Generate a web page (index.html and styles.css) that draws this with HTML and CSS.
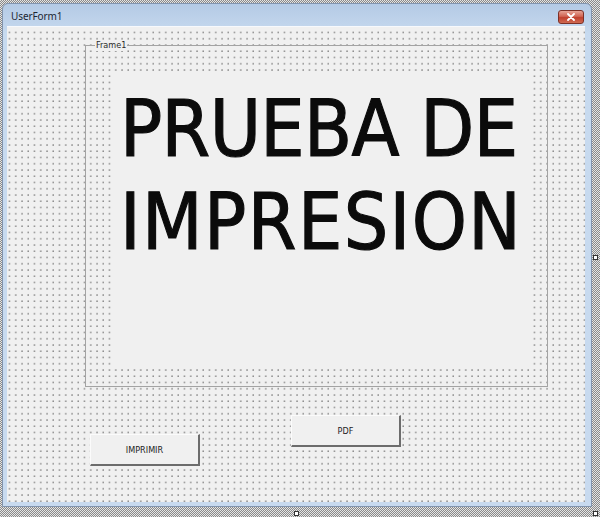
FILE: index.html
```html
<!DOCTYPE html>
<html lang="es">
<head>
<meta charset="utf-8">
<title>UserForm1</title>
<link rel="stylesheet" href="styles.css">
</head>
<body>
<div class="stage">
  <div class="window">
    <div class="titlebar">
      <span class="title">UserForm1</span>
      <span class="close">
        <svg width="10" height="8" viewBox="0 0 10 8"><path d="M2 1 L8 7 M8 1 L2 7" stroke="#fff" stroke-width="1.8" stroke-linecap="round"/></svg>
      </span>
    </div>
    <div class="client">
      <div class="frame">
        <span class="caption">Frame1</span>
        <div class="biglabel"><span class="line1">PRUEBA DE</span><br><span class="line2">IMPRESION</span></div>
      </div>
      <div class="controls">
        <div class="btn btn-low">IMPRIMIR</div>
        <div class="btn">PDF</div>
      </div>
    </div>
  </div>
  <span class="handle handle-right"></span>
  <span class="handle handle-bottom"></span>
  <span class="handle handle-corner"></span>
</div>
</body>
</html>
```
FILE: styles.css
```css
html, body {
  margin: 0;
  padding: 0;
}
body {
  width: 600px;
  height: 517px;
  overflow: hidden;
  background: #f0f0f0;
}
.stage {
  position: relative;
  width: 600px;
  height: 517px;
  box-sizing: border-box;
  padding: 3px 8px 10px 2px;
  background: repeating-conic-gradient(#8a8a8a 0 25%, #e4e4e4 0 50%) 0 0 / 2px 2px;
}
.window {
  height: 100%;
  box-sizing: border-box;
  display: flex;
  flex-direction: column;
  border: 1px solid #8194ae;
  border-radius: 6px 6px 0 0;
  padding: 0 6px 4px 4px;
  background: linear-gradient(#b4cae5, #c7daef 30px, #c8daef);
}
.titlebar {
  height: 23px;
  display: flex;
  align-items: center;
  justify-content: space-between;
  padding-left: 4px;
  padding-right: 1px;
}
.title {
  font-family: "Noto Sans", "Liberation Sans", sans-serif;
  font-size: 10px;
  letter-spacing: -0.1px;
  color: #1c2633;
}
.close {
  width: 26px;
  height: 14px;
  box-sizing: border-box;
  display: flex;
  align-items: center;
  justify-content: center;
  margin-top: 2px;
  border: 1px solid #7d3026;
  border-radius: 3px;
  background: linear-gradient(#e7a496, #d06453 45%, #c0402e 55%, #cf6a52);
}
.client {
  flex: 1;
  background-color: #f0f0f0;
  background-image: radial-gradient(circle at 1px 1px, #8a8a8a 0.5px, rgba(240,240,240,0) 1px);
  background-size: 6.25px 6.25px;
  background-position: 1.5px 4.5px;
  border-top: 1px solid #f7f9fc;
  margin-top: -1px;
}
.frame {
  position: relative;
  box-sizing: border-box;
  width: 463px;
  height: 342px;
  margin: 18px 0 0 78px;
  border: 1px solid #a3a3a3;
}
.caption {
  position: absolute;
  left: 9px;
  top: -6px;
  padding: 0 1px;
  background: #f0f0f0;
  font-family: "DejaVu Sans", sans-serif;
  font-stretch: condensed;
  font-size: 9px;
  line-height: 11px;
  color: #2a2a2a;
}
.biglabel {
  box-sizing: border-box;
  width: 417px;
  height: 294px;
  margin: 27px 0 0 27px;
  padding: 10px 0 0 7px;
  background: #f0f0f0;
  font-family: "DejaVu Sans", sans-serif;
  font-stretch: condensed;
  font-size: 78px;
  line-height: 93px;
  -webkit-text-stroke: 1.1px #0b0b0b;
  color: #0b0b0b;
  white-space: nowrap;
}
.line1 {
  letter-spacing: -0.7px;
}
.line2 {
  letter-spacing: 1.4px;
}
.controls {
  display: flex;
  align-items: flex-start;
  gap: 91px;
  margin-top: 28px;
  padding-left: 83px;
}
.btn {
  width: 110px;
  height: 32px;
  box-sizing: border-box;
  display: flex;
  align-items: center;
  justify-content: center;
  background: #f0f0f0;
  border-top: 1px solid #fbfbfb;
  border-left: 1px solid #fbfbfb;
  border-right: 2px solid #6c6c6c;
  border-bottom: 2px solid #6c6c6c;
  font-family: "DejaVu Sans", sans-serif;
  font-stretch: condensed;
  font-size: 9px;
  color: #222;
}
.btn-low {
  margin-top: 19px;
}
.handle {
  position: absolute;
  width: 5px;
  height: 5px;
  box-sizing: border-box;
  background: #fff;
  border: 1px solid #333;
}
.handle-right {
  left: 593px;
  top: 255px;
}
.handle-bottom {
  left: 294px;
  top: 511px;
}
.handle-corner {
  left: 593px;
  top: 511px;
}
```
